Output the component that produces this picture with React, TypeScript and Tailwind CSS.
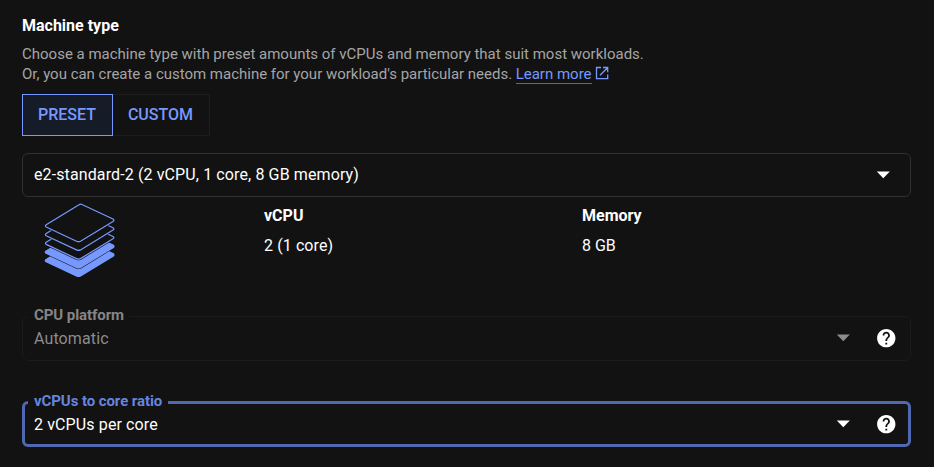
import React from "react";

function Caret({ color }: { color: string }) {
  return (
    <svg className="block" width="14" height="8" viewBox="0 0 14 8">
      <path d="M0.8 0.5h13L7.3 7.2z" fill={color} />
    </svg>
  );
}

function Help() {
  return (
    <svg className="block" width="22" height="22" viewBox="0 0 24 24" fill="#fff">
      <path d="M12.3 2.2C6.78 2.2 2.3 6.68 2.3 12.2s4.48 10 10 10 10-4.48 10-10S17.82 2.2 12.3 2.2zm1 17h-2v-2h2v2zm2.07-7.75l-.9.92C13.75 13.1 13.3 13.7 13.3 15.2h-2v-.5c0-1.1.45-2.1 1.17-2.83l1.24-1.26c.37-.36.59-.86.59-1.41 0-1.1-.9-2-2-2s-2 .9-2 2H8.3c0-2.21 1.79-4 4-4s4 1.79 4 4c0 .88-.36 1.68-.93 2.25z" />
    </svg>
  );
}

const SHEET = "M44 9.8Q45.5 8.6 47 9.5L78 24Q79.8 25.2 78 26.4L45.5 46.2Q43.5 47.2 41.5 46.2L11.2 32Q9.6 31 11.2 29.8Z";

function Stack() {
  const layers = [
    { y: 34.7, solid: true },
    { y: 26.2, solid: true },
    { y: 17.4, solid: false },
    { y: 8.7, solid: false },
    { y: 0, solid: false },
  ];
  return (
    <svg className="block" width="90" height="90" viewBox="0 0 90 90">
      {layers.map((l) => (
        <g key={l.y} transform={`translate(0 ${l.y})`}>
          <path d={SHEET} fill="#121212" stroke="#121212" strokeWidth="2.4" />
          <path d={SHEET} fill={l.solid ? "#7799ff" : "#121212"} stroke="#7799ff" strokeWidth={l.solid ? "1.4" : "1.2"} />
        </g>
      ))}
    </svg>
  );
}

export default function App() {
  return (
    <main className="h-[467px] w-[934px] overflow-hidden bg-[#121212] pl-[22px] pt-[15px] font-['Roboto',sans-serif] text-base text-white">
      <h2 className="h-5 pt-px text-base leading-5 font-bold">Machine type</h2>
      <div className="mt-[9px] text-[15px] leading-5 whitespace-nowrap text-[#a5a5a5]">
        <p>Choose a machine type with preset amounts of vCPUs and memory that suit most workloads.</p>
        <p className="flex">
          <span className="tracking-[-0.01px]">Or, you can create a custom machine for your workload's particular needs.</span>
          <a className="ml-[3.5px] h-5 border-b border-[#4d68b5] text-[#7799ff]">Learn more</a>
          <svg className="mt-[2px] ml-[3px]" width="15" height="15" viewBox="0 0 15 15" fill="none" stroke="#7799ff" strokeWidth="1.3">
            <path d="M6 1.5H1.5v11.2h11.2V8.5M8 1.5h4.7v4.7M12.5 1.7L5 9.2" />
          </svg>
        </p>
      </div>

      <div className="mt-[10px] flex h-[42px] text-base font-medium text-[#7799ff]">
        <button className="w-[91px] border border-[#7799ff] bg-[#151b27] pr-px">PRESET</button>
        <button className="w-[97px] border border-l-0 border-[#1d1d1d] pr-px">CUSTOM</button>
      </div>

      <div className="mt-[17px] flex h-11 w-[889px] items-center justify-between rounded-md border border-[#303030] pr-5 pl-[11px]">
        <span className="tracking-[0.115px]">e2-standard-2 (2 vCPU, 1 core, 8 GB memory)</span>
        <Caret color="#fff" />
      </div>

      <div className="flex h-[108px]">
        <div className="-mt-[2px] ml-[13px] w-[229px]"><Stack /></div>
        <div className="w-[318px] pt-[9px] leading-5">
          <div className="font-bold">vCPU</div>
          <div className="mt-[10px] tracking-[0.1px]">2 (1 core)</div>
        </div>
        <div className="pt-[9px] leading-5">
          <div className="font-bold">Memory</div>
          <div className="mt-[10px]">8 GB</div>
        </div>
      </div>

      <fieldset className="h-[56px] w-[889px] rounded-md border border-[#1b1b1b] pl-[5px]">
        <legend className="h-[22px] pr-[5px] pl-[6px] text-[15px] leading-5 font-bold tracking-[-0.08px] text-[#858585]">CPU platform</legend>
        <div className="flex h-[22px] items-center pr-[13px] pl-[6px] text-[#8c8c8c]">
          <span className="flex-1 pt-[2px] tracking-[0.12px]">Automatic</span>
          <Caret color="#8c8c8c" />
          <span className="ml-[25px]"><Help /></span>
        </div>
      </fieldset>

      <fieldset className="mt-[30px] h-[56px] w-[889px] rounded-md border-3 border-[#4f68b1] pl-[3px]">
        <legend className="h-[22px] pr-[6px] pl-[6px] text-[15px] leading-5 font-bold tracking-[-0.08px] text-[#6685df]">vCPUs to core ratio</legend>
        <div className="flex h-[22px] items-center pr-[11px] pl-[6px]">
          <span className="flex-1 pt-[2px] tracking-[0.12px]">2 vCPUs per core</span>
          <Caret color="#fff" />
          <span className="ml-[25px]"><Help /></span>
        </div>
      </fieldset>
    </main>
  );
}
